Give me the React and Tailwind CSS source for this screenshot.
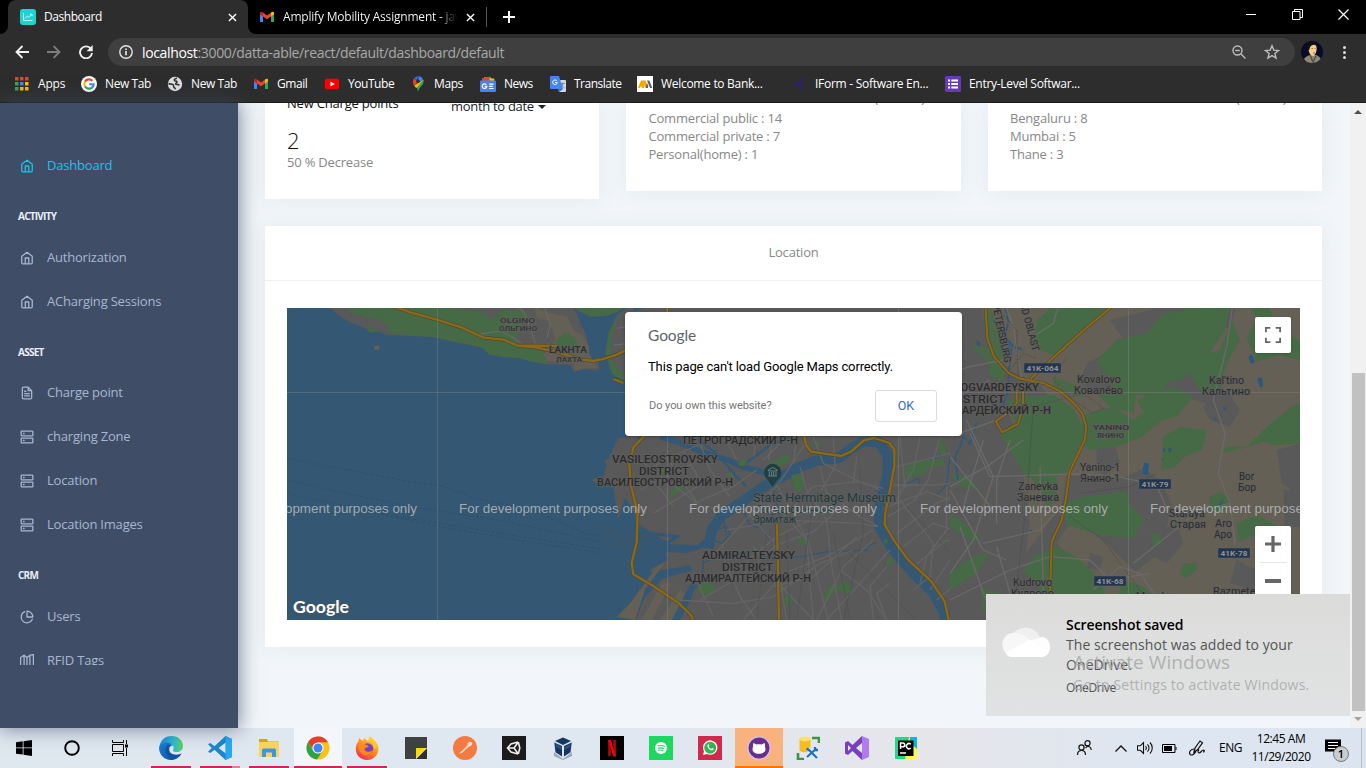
import React from "react";

/* ---------- shared bits ---------- */

const Svg = ({ box = "0 0 24 24", className = "size-4", children, ...rest }) => (
  <svg viewBox={box} className={`shrink-0 ${className}`} fill="none" {...rest}>
    {children}
  </svg>
);

/* ---------- browser icons ---------- */

const Gmail = ({ className = "size-4" }) => (
  <Svg box="0 0 16 16" className={className}>
    <path d="M1 4.2V13h3V6.8z" fill="#4285f4" />
    <path d="M15 4.2V13h-3V6.8z" fill="#34a853" />
    <path d="M4 3.4v4L8 10.3l4-2.9v-4L8 6.4z" fill="#ea4335" />
    <path d="M1 4c0-1.6 1.6-1.7 3-.6v4L1 5.2z" fill="#c5221f" />
    <path d="M15 4c0-1.6-1.6-1.7-3-.6v4l3-2.2z" fill="#fbbc04" />
  </Svg>
);

const AppsGrid = () => (
  <Svg box="0 0 16 16">
    {["#ea4335", "#ea4335", "#ea4335", "#34a853", "#4285f4", "#fbbc04", "#34a853", "#fbbc04", "#fbbc04"].map((c, i) => (
      <rect key={i} x={(i % 3) * 5} y={1 + Math.floor(i / 3) * 5} width="3.500" height="3.500" fill={c} />
    ))}
  </Svg>
);

const GoogleG = () => (
  <Svg box="0 0 16 16">
    <circle cx="8" cy="8" r="8" fill="#fff" />
    <g strokeWidth="2.1">
      <path d="M11.4 4.8A4.7 4.7 0 0 0 4 5.6" stroke="#ea4335" />
      <path d="M4 5.6a4.7 4.7 0 0 0 0 4.8" stroke="#fbbc04" />
      <path d="M4 10.4a4.7 4.7 0 0 0 7 1.2" stroke="#34a853" />
      <path d="M11 11.6a4.7 4.7 0 0 0 1.6-3.4H8.2" stroke="#4285f4" />
    </g>
  </Svg>
);

const GlobeMark = () => (
  <Svg box="0 0 16 16">
    <circle cx="8" cy="8" r="7.2" fill="#dedfe1" />
    <path d="M10 2.200C8 2.500 6.800 3.500 7.500 4.500c.8.800 2.500.4 2.600 1.500 0 1-1.800.8-1.500 1.900.5 1 2.700.2 3.900 1.300M1.500 7.500c1.500.8 3 .3 4.500 1.200 1 .8.300 1.800 1 2.600.7.500 1.400.4 1.200 2" stroke="#2d2d2d" strokeWidth="1.500" />
  </Svg>
);

const YouTube = () => (
  <Svg box="0 0 16 16">
    <rect x=".8" y="2.700" width="14.400" height="10.600" rx="2.500" fill="#f00" />
    <path d="M6.500 5.500v5L10.700 8z" fill="#fff" />
  </Svg>
);

const MapsPin = () => (
  <Svg box="0 0 16 16">
    <path d="M4.200 9.800l9-6.400c.4 2.200 0 3.500-1 5L6.200 12z" fill="#fbbc04" />
    <path d="M7 11.500l6.200-7.800c.6 3-.5 4.800-2 6.500-1.600 2-2.600 3-3.200 5.800-.3-2-.6-3-1-4.500z" fill="#34a853" />
    <path d="M3 5.500C3 8 3.600 9 4.400 10L8 5.700 4 2.600C3.300 3.400 3 4.400 3 5.500z" fill="#ea4335" />
    <path d="M4 2.600A5.200 5.200 0 0 1 9.500.3L6.400 4z" fill="#1a73e8" />
    <path d="M9.500.3a5 5 0 0 1 3.400 3L9.600 7 8 3.500z" fill="#4285f4" />
    <circle cx="8" cy="5.300" r="1.800" fill="#2d2d2d" />
  </Svg>
);

const NewsMark = () => (
  <Svg box="0 0 16 16">
    <path d="M1.500 3l9-2.500.8 3z" fill="#34a853" />
    <path d="M4 1.200l10.500 1.500L14 5H4z" fill="#fbbc04" />
    <path d="M2 2.500l7-1.500 1 4H2z" fill="#ea4335" />
    <rect x="0" y="4.500" width="16" height="11.500" rx="1" fill="#4285f4" />
    <path d="M6.300 8.700A2.300 2.300 0 1 0 6.800 10.400H4.800M9.200 8.200h4.300M9.200 10.400h3.500M9.200 12.500h4.300" stroke="#fff" strokeWidth="1.200" />
  </Svg>
);

const TranslateMark = () => (
  <Svg box="0 0 16 16">
    <path d="M6 4h9a1 1 0 0 1 1 1v10a1 1 0 0 1-1 1H9z" fill="#d5d7da" />
    <path d="M1 0h8l4 13H1a1 1 0 0 1-1-1V1a1 1 0 0 1 1-1z" fill="#4285f4" />
    <path d="M6.800 4.800a2.300 2.300 0 1 0 .5 1.700H5" stroke="#fff" strokeWidth="1" />
    <path d="M10.500 7.500h4.500M12.700 6.500v1c0 2-1 3.500-2 4.300M11 8c.6 1.600 2 3 3.500 3.800" stroke="#607d9b" strokeWidth=".8" />
    <path d="M9 16l4-3H8z" fill="#3367d6" />
  </Svg>
);

const BankMark = () => (
  <Svg box="0 0 16 16">
    <path d="M0 0h16v16H0z" fill="#fff" />
    <path d="M1 12L4 4.500h2.500L8 9l-1 3H5l-1-2-1 2z" fill="#f5a800" />
    <path d="M6 4.500h2.600l2.600 7.500H8.800z" fill="#f5a800" />
    <path d="M10 4.500h2.400L15.300 12H13zM8.500 12L10 7l1.300 3-.5 2z" fill="#5c6168" />
  </Svg>
);

const IFormMark = () => (
  <Svg box="0 0 16 16">
    <path d="M12.500 1c.5 2.500-1 4-3 5l-6 2 6 2c2 1 3.500 2.500 3 5-2-.5-2.500-3.500-5-5L3 8l4.500-2c2.500-1.500 3-4.500 5-5z" fill="#2b2080" />
    <path d="M3 8h8" stroke="#2b2080" strokeWidth="1.500" />
  </Svg>
);

const FormsMark = () => (
  <Svg box="0 0 16 16">
    <rect width="16" height="16" rx="1" fill="#673ab7" />
    <path d="M3 4.500h2M3 8h2M3 11.500h2M6.300 4.500H13M6.300 8H13M6.300 11.500H13" stroke="#fff" strokeWidth="1.900" />
  </Svg>
);

const bookmarks = [
  [AppsGrid, "Apps", "w-[66px] gap-[7px]", "tracking-[-0.2px]"],
  [GoogleG, "New Tab", "w-[86px] gap-[8px]", "tracking-[-0.4px]"],
  [GlobeMark, "New Tab", "w-[86px] gap-[8px]", "tracking-[-0.4px]"],
  [Gmail, "Gmail", "w-[71px] gap-[8px]", "tracking-[-0.45px]"],
  [YouTube, "YouTube", "w-[86px] gap-[8px]", "tracking-[-0.45px]"],
  [MapsPin, "Maps", "w-[70px] gap-[8px]", "tracking-[-0.4px]"],
  [NewsMark, "News", "w-[70px] gap-[8px]", "tracking-[-0.5px]"],
  [TranslateMark, "Translate", "w-[87px] gap-[8px]", "tracking-[-0.5px]"],
  [BankMark, "Welcome to Bank...", "w-[154px] gap-[8px]", "tracking-[-0.3px]"],
  [IFormMark, "IForm - Software En...", "w-[154px] gap-[8px]", "tracking-[-0.27px]"],
  [FormsMark, "Entry-Level Softwar...", "w-[150px] gap-[8px]", "tracking-[-0.3px]"],
];

const Cross = ({ className }) => (
  <Svg box="0 0 10 10" className={className} stroke="#fff" strokeWidth="1.500">
    <path d="M1 1l8 8M9 1L1 9" />
  </Svg>
);

function Browser() {
  return (
    <header className="h-[103px] shrink-0 border-b border-[#1b1b1b] bg-[#2d2d2d] text-white">
      <div className="flex h-[34px] bg-black">
        <div className="flex w-[8px] items-end">
          <Svg box="0 0 8 8" className="size-2"><path d="M8 0v8H0a8 8 0 0 0 8-8z" fill="#2d2d2d" /></Svg>
        </div>
        <div className="flex w-[240px] items-center rounded-t-lg bg-[#2d2d2d] pl-3">
          <Svg box="0 0 16 16">
            <rect width="16" height="16" rx="3" fill="#1dd5d0" />
            <path d="M3.500 4v7.500h9M4.800 9.500l2.500-2.500 1.500 1.400 3-3M10 5.200h2v2" stroke="#fff" strokeWidth="1" opacity=".75" />
          </Svg>
          <span className="ml-2 w-[184px] text-[12px] tracking-[-0.45px]">Dashboard</span>
          <Cross className="size-[9px]" />
        </div>
        <div className="flex w-[8px] items-end">
          <Svg box="0 0 8 8" className="size-2"><path d="M0 0v8h8a8 8 0 0 1-8-8z" fill="#2d2d2d" /></Svg>
        </div>
        <div className="flex w-[230px] items-center pl-[3px]">
          <Gmail className="size-4" />
          <span className="ml-2 w-[177px] overflow-hidden whitespace-nowrap bg-gradient-to-r from-white from-88% to-black to-100% bg-clip-text text-[12px] tracking-[-0.2px] text-transparent">
            Amplify Mobility Assignment - jav
          </span>
          <Cross className="ml-[6px] size-[9px]" />
        </div>
        <div className="mt-[7px] h-5 w-px bg-[#555]" />
        <Svg box="0 0 12 12" className="mt-[11px] ml-[16px] size-3" stroke="#fff" strokeWidth="2"><path d="M6 0v12M0 6h12" /></Svg>
        <div className="ml-auto flex items-start gap-[35px] pt-[9px] pr-[17px]">
          <Svg box="0 0 11 11" className="size-[11px]" stroke="#fff"><path d="M0 5.500h10" /></Svg>
          <Svg box="0 0 11 11" className="size-[11px]" stroke="#fff"><path d="M.5 2.500h7.500v8H.5zM2.500 2.500v-2h8v8H8" /></Svg>
          <Svg box="0 0 11 11" className="size-[11px]" stroke="#fff" strokeWidth="1.200"><path d="M.5.5l10 10M10.500.5l-10 10" /></Svg>
        </div>
      </div>
      <div className="flex h-[36px] items-center">
        <div className="flex w-[108px] items-center gap-[18px] pl-[15px]">
          <Svg box="0 0 14 14" className="size-[14px]" stroke="#f1f1f1" strokeWidth="1.800"><path d="M14 7H1.500M7.500 1L1.500 7l6 6" /></Svg>
          <Svg box="0 0 14 14" className="size-[14px]" stroke="#7d7d7d" strokeWidth="1.800"><path d="M0 7h12.500M6.500 1l6 6-6 6" /></Svg>
          <Svg box="0 0 14 14" className="size-[14px]"><path d="M12 4A6 6 0 1 0 13 8" stroke="#f1f1f1" strokeWidth="1.900" /><path d="M13.700 0v6.200H7.500z" fill="#f1f1f1" /></Svg>
        </div>
        <div className="flex h-7 w-[1187px] items-center rounded-full bg-[#3f3f3f] pl-[11px]">
          <Svg box="0 0 14 14" className="size-[14px]" stroke="#e6e6e6" strokeWidth="1.400"><circle cx="7" cy="7" r="6.200" /><path d="M7 6v4.300M7 3.500v1.500" strokeWidth="1.700" /></Svg>
          <span className="ml-[9px] text-[14px] tracking-[-0.35px] text-[#a9a9a9]"><span className="text-white">localhost</span>:3000/datta-able/react/default/dashboard/default</span>
          <Svg box="0 0 14 14" className="mr-[18px] ml-auto size-[14px]" stroke="#bdbdbd" strokeWidth="1.400"><circle cx="5.500" cy="5.500" r="4.500" /><path d="M9 9l4.500 4.500M3.300 5.500h4.400" /></Svg>
          <Svg box="0 0 16 16" className="mr-[15px] size-4" stroke="#bdbdbd" strokeWidth="1.400"><path d="M8 1.800l1.800 4.300 4.700.4-3.600 3 1.100 4.600-4-2.500-4 2.500 1.100-4.600-3.600-3 4.700-.4z" /></Svg>
        </div>
        <Svg box="0 0 22 22" className="ml-[6px] size-[22px]">
          <clipPath id="avatar"><circle cx="11" cy="11" r="11" /></clipPath>
          <g clipPath="url(#avatar)">
            <path d="M0 0h22v22H0z" fill="#080a2b" />
            <path d="M3 18c1-2 3-3 6-4l6 0c3 1 5 3 5 5v3H6z" fill="#8f8771" />
            <path d="M8 4c3-2 7-1 7.500 2 .5 3-.5 8-3.500 9-2 0-4-3-4.500-6z" fill="#f2cf8b" />
            <path d="M6.500 9C5 4 7 1 11 1c4-.5 5.500 2 5 3.500-3-1.500-6-.5-7 2l-1 3z" fill="#16110e" />
            <path d="M10.500 7.500h1.500M13.500 7.500h1M12 12h2" stroke="#9c7041" />
            <path d="M9 14l3 7 3-6" stroke="#4e5447" strokeWidth="1.500" />
          </g>
        </Svg>
        <div className="ml-[20px] flex flex-col gap-[2px]">
          <i className="size-[3px] rounded-full bg-[#ddd]" /><i className="size-[3px] rounded-full bg-[#ddd]" /><i className="size-[3px] rounded-full bg-[#ddd]" />
        </div>
      </div>
      <nav className="flex h-[28px] items-center pl-[15px]">
        {bookmarks.map(([Icon, name, w, t], i) => (
          <div key={i} className={`flex items-center whitespace-nowrap ${w}`}>
            <Icon />
            <span className={`text-[12px] ${t}`}>{name}</span>
          </div>
        ))}
      </nav>
    </header>
  );
}

/* ---------- sidebar ---------- */

const glyphs = {
  home: <path d="M3 9l9-7 9 7v11a2 2 0 0 1-2 2H5a2 2 0 0 1-2-2zM9 22V12h6v10" />,
  file: <path d="M14 2H6a2 2 0 0 0-2 2v16a2 2 0 0 0 2 2h12a2 2 0 0 0 2-2V8zM14 2v6h6M16 13H8M16 17H8M10 9H8" />,
  server: <path d="M3 2h18a1 1 0 0 1 1 1v6a1 1 0 0 1-1 1H3a1 1 0 0 1-1-1V3a1 1 0 0 1 1-1zM3 14h18a1 1 0 0 1 1 1v6a1 1 0 0 1-1 1H3a1 1 0 0 1-1-1v-6a1 1 0 0 1 1-1zM6 6h1M6 18h1" />,
  pie: <path d="M21.200 15.900A10 10 0 1 1 8 2.800M22 12A10 10 0 0 0 12 2v10z" />,
  map: <path d="M1 22V6l6-4 5 4 5-4 6-1v21M7 2v20M12 6v16M17 3v19" />,
};

const Caption = ({ children, className = "h-12 pt-[20px]" }) => (
  <div className={`shrink-0 pl-[18px] text-[10px] leading-[18px] font-bold tracking-[-0.75px] text-[#e8edf7] ${className}`}>{children}</div>
);

const Item = ({ icon, children, className = "text-[#a9b7d0]" }) => (
  <div className={`flex h-11 shrink-0 items-center pl-5 ${className}`}>
    <Svg className="mt-[2px] size-[14px]" stroke="currentColor" strokeWidth="2.200" strokeLinejoin="round" strokeLinecap="round">{glyphs[icon]}</Svg>
    <span className="ml-[13px] text-[13px] leading-5 tracking-[-0.200px]">{children}</span>
  </div>
);

function Sidebar() {
  return (
    <aside className="relative z-10 w-[238px] shrink-0 bg-[#3f4d67] pt-10 shadow-[1px_0_18px_1px_#3f4d67a0]">
      <div className="flex h-[522px] flex-col overflow-hidden">
        <Item icon="home" className="text-[#1dc4e9]">Dashboard</Item>
        <Caption>ACTIVITY</Caption>
        <Item icon="home">Authorization</Item>
        <Item icon="home">ACharging Sessions</Item>
        <Caption className="h-[47px] pt-[20px]">ASSET</Caption>
        <Item icon="file">Charge point</Item>
        <Item icon="server">charging Zone</Item>
        <Item icon="server">Location</Item>
        <Item icon="server">Location Images</Item>
        <Caption>CRM</Caption>
        <Item icon="pie">Users</Item>
        <Item icon="map">RFID Tags</Item>
      </div>
    </aside>
  );
}

/* ---------- map drawing ---------- */

const WATER = "#345874";
const GREEN = "#466a45";
const TAN = "#656055";

/* x is the left edge, y the baseline and w the drawn width of a label */
const Label = ({ x, y, w, s = 11, c = "#2b2b2b", weight = 500, children, ...rest }) => (
  <text x={x} y={y} fontSize={s} textLength={w} lengthAdjust="spacingAndGlyphs" fontWeight={weight} fill={c} stroke="#5f5f5f" strokeWidth="1.500" paintOrder="stroke" {...rest}>
    {children}
  </text>
);

const Shield = ({ x, y, w = 32, children }) => (
  <g>
    <rect x={x} y={y} width={w} height="10" fill="#25354b" stroke="#5c6370" strokeWidth=".5" />
    <text x={x + 2.500} y={y + 8.100} fontSize="8" fontWeight="700" fill="#8e939c" textLength={w - 5} lengthAdjust="spacingAndGlyphs">{children}</text>
  </g>
);

const Highway = ({ d, w = 7 }) => (
  <g strokeLinejoin="round">
    <path d={d} stroke="#564a26" strokeWidth={w + 4} />
    <path d={d} stroke="#87691f" strokeWidth={w} />
  </g>
);

function WestShore() {
  return (
    <g transform="translate(287 305) scale(.33333)">
      <path d="M0 0h1020v960H0z" fill={WATER} />
      <path d="M120 0l40 35 30 17 50 20 10 10 25-2 25 10 70 2 70 4 60 14 60 12 30 8 15 18 35 7 60 5 35 10 45 8 70 2 12 20 28-8 45 5V165l-15 5-14-20-8-60-18-35L860 0z" fill="#595959" />
      <path d="M165 0l25 20 35 10 28 15-13 30 10 8 30-5 90 14 70 4 60 14 60 12 30 8 15 18 35 7 60 5 35 10 45 8-5-30-18-20-45-10-30-15 12-25 32-48-20-12-60-4-32 28-20-18L430 0z" fill={GREEN} />
      <path d="M235 45l35-5 38 25-5 18-45-12z" fill="#595959" />
      <path d="M740 0l30 20 70 15 20 40 30 20 28 50-5 18 22 25-45 2-28 8-2-24-80-6-10-20 35-45-20-55-35-10z" fill={TAN} />
      <path d="M805 110l30-30 28 20 15 35-20 5-20-20-25 15zM860 0h155l-40 38-90 4z" fill={GREEN} />
      <path d="M860 10l50 25 50-3 60-22-45 65-15 65-20 5-4 25-11-30-8 22-10-15-5-65z" fill={WATER} />
      <path d="M1020 10l-30 20-20 45-5 40 5 70 20 28 30 17z" fill="#595959" />
      <path d="M1000 20l-25 65-4 70 6 20 43 40v17l-45-25-20-62 10-65z" fill={GREEN} />
      <path d="M262 122h15v12h-15z" fill={TAN} />
      <g stroke="#6b6b6b" strokeWidth="3">
        <path d="M680 0l30 20 20 50 15 45M560 90l80-12 40 20 40 30M770 0l20 60-10 40M980 120l40-4M990 70l30-5" />
      </g>
      <Highway d="M310 0l60 22 80 22 75 24 65 30 60 6 40 17 120 2M690 122l60 6 55 12 80 24 35 4 50-12 50-18M980 222l40 17" />
      <g stroke="#2f4b68" strokeWidth="2.200" strokeDasharray="10 6">
        <path d="M0 460l180 35 190 35 90 12 110 40 160 30 170 76 120 5M0 525l200 45 190 38 260 40 370 80M0 565l280 60 180 30 240 40 320 48M200 610l260 55 260 45 220 33 80-2" />
      </g>
      <path d="M945 445l15-4 8 14 52 25v10l-28-8-12 65-60-15-6-10 60-10-25-55zM985 545l28-15v100h-15zM1020 890l-20 10-12 60h32z" fill="#595959" />
    </g>
  );
}

function City() {
  return (
    <g transform="translate(600 300) scale(.33333)">
      {/* islands, gulf and the Neva with its arms */}
      <path d="M76 0H1120v980H76z" fill="#595959" />
      <path d="M60 240h20v170h45l-30 35-15 28-20-3-15 12-45-8v66l30 10-8 30 20 55 18 8 5-50 18-12 22 15-8 30 18 45 60 40 45 25-25 30-38 10-5 40 120-20 5 15-90 25-55 60-35 90H0V240z" fill={WATER} />
      <path d="M55 415l60-10-20 70-10 80-35 10-45-20 25-80zM40 560l50-10 20 60-10 18-25-35-20 65z" fill="#595959" />
      <path d="M150 710h25l28 18-30 22-50-5zM205 735l25-2 60 3 40-30 8 28-75 25-58-3zM115 780l85-15 5 15-60 30z" fill={WATER} />
      <path d="M50 950l40-40 80-110 25-12-60 80-30 92zM125 960l60-110 30 0-60 110zM180 960l60-90 15 10-30 80z" fill={TAN} />
      <path d="M215 960l60-115 20-20-25 80-30 55z" fill={WATER} />
      <g stroke={WATER} strokeLinejoin="round">
        <path d="M325 745l12-60 30-40 65-43 54-40 40-20 60-35 60-25 70-8 40-30 35-20 45 2 28 40-2 60-22 80-4 70 40 70 65 75 58 55 35 65v50" strokeWidth="31" />
        <path d="M180 410l60 18 60 26 90 28 40 20 60 15 55 8" strokeWidth="17" />
        <path d="M270 400l80 60 60 70 30 30M430 495l80-60 60-25" strokeWidth="7" />
        <path d="M345 690l35-10 10 25-25 25-35-15M310 780l-5 60-50 60-15 50M305 790l60-25 90-10 60 20 90-5 80-15 120-5M370 650l10 60M420 615l30 60 35 10 40 50M520 570l15 60-40 40M800 740l28-12M905 560l50-25 5 20M1005 590l35-35 10-85 20-35 0-25M1000 480l40-30" strokeWidth="4" />
      </g>
      <path d="M150 700l80 10-60 40-25-15M100 30l30-10" stroke={WATER} strokeWidth="10" />
      {/* parks */}
      <path d="M415 490l15-12 10 8-5 12h-20zM500 490l30-10 20-15 25 8-20 20-40 12zM575 525l30-5 10 30-15 28-20-15zM640 430l20-5 4 12-18 8zM915 500l35-18 80-5 5 18-40 8-25 20-50 14zM1010 435l10-25 20 45-12 15zM380 525l15-8 5 8-15 8zM175 510l18-6 5 15-15 5zM200 600l20-35 40-10 20-15-5 15-45 25-30 25zM290 865l25-20 35 15-15 25-45-5zM665 895l30-45 20 10 15-20 25 18v20l-25 3-20-15-25 35zM553 890l15-5 10 20-20 20zM590 720l18-10 15 10-15 20zM860 780l15-10 5 20-20 10zM1035 720l30 18 8 25zM1065 830l50-25v25zM850 720l10-4 4 10-8 5z" fill={GREEN} />
      {/* street grid */}
      <g stroke="#646465" strokeWidth="4">
        <path d="M125 520l80-45 90-40M120 570l180-90M160 640l140-85 60-25M200 470l40 65 50 70M250 450l60 110M300 430l30 80 60 80M160 540l60 80M120 480l180 135M280 610l120-50 70-50" />
        <path d="M350 755l100-110 90-100 80-120M380 690l170-30 230 10 50 10M430 625l90 100 40 235M480 600l60 30 80 90 20 240M530 555l45 80 50 90 60 235M600 500l20 70 60 90 15 140 30 160M660 500l20 80 100 70 55 30M560 640l80-80 130-15 80 20M420 800l110-90 100-50M300 900l120-70 110-95 110-40 100-90M230 900l170 10 120-20 140-100 100-40M520 860l120-30 130-120M430 960l120-140 130-50 140-80M650 960l80-160 90-80M280 820l60 130M370 770l50 120 50 70M460 740l75 110 105 110M720 810l80 60 60 90M820 960l-10-100 50-60M870 750l-90 100-100 110" />
        <path d="M640 410l30 80 100 50 70 30M700 410l5 90-40 70M770 470l-10 80M900 410l15 150-30 50M960 410l-20 100-45 70M1020 410l-35 130-40 60-80 50M890 500l120-30 110-30M870 555l130 0 120-10M850 625l130-50 140 50M890 700l120-90 110-50M910 740l90-70 120 40M900 600l100 130-10 100-50 40M940 800l100-80 80 30M1040 560l0 130-60 80-20 80M990 870l60-90 70 30M1010 900l110-90M1040 960l80-80M870 850l-40 30 30 80" />
        <path d="M380 420l30 60M470 410l-10 60M520 410l-15 70M590 410l-10 80M550 420l-60 60" />
      </g>
      <g stroke="#4d5055" strokeWidth="2">
        <path d="M500 700l-30 260M560 700l10 260M640 600l-50 360M700 700l50 260M780 500l10 200-60 260M750 760l200 200M920 620l200 210M1060 500l-10 460M0 680l100 30 80 0M0 700l80 30 90-5M0 720l70 25 70-5" />
      </g>
      <Highway d="M0 180l45-14 30-14M40 237l30 12M201 0v35M135 405l-35 38-12 50 5 65 20 80-3 90-15 60 5 35 60 35 75 50 40 40 8 30" />
      <Highway d="M531 670l6 290M612 405l6 30 15 20 90 13 30-13 40-35 30-6 45 15 15 20v50l-15 80-12 60-2 35 30 50 40 55 70 65 40 60 13 60" />
      {/* museum pin */}
      <path d="M517 560l-15-22a26 26 0 1 1 32 0z" fill="#203f42" />
      <path d="M505 510l13-8 13 8v3h-26zM508 527v-11M515 527v-11M521 527v-11M528 527v-11M505 528h26" stroke="#80908f" strokeWidth="2.500" />
    </g>
  );
}

function EastSuburbs() {
  return (
    <g transform="translate(950 300) scale(.33333)">
      <path d="M68 0H1060v980H68z" fill="#595959" />
      <path d="M90 0H1060v980H330l-20-50-120-20 20-300 20-140-80-190-100-100-40-180z" fill={TAN} />
      <path d="M0 410l150-20 60 100 30 180-30 220-110 80H0z" fill="#595959" />
      <path d="M0 0h95l15 130 70 80 90 45 60 80 80 60-20 40-80-60-120-50-150 50L0 380z" fill="#595959" />
      {/* fields and built-up patches */}
      <path d="M480 60l120-30 80-40h190l-30 90-60 20-20 80 60 60-20 80-100-30-80 20-80-60-90 40-60-40 20-60 120-60zM350 525l170 10 60-30 55 40 30 70-30 140-80 60-90-90-130-100zM330 620l30 50-40 60 40 50-60 40-30 200h-80l30-250zM440 440l50-20 20 70-50 40-20-30zM980 450l75-20v160l-60-40zM790 290l40-20 40 60-30 50-60-20-20-40zM640 690l40-20 20 60-50 60-40-20zM420 760l40 10-10 40-40-5zM860 780l60 30-10 60-70-20zM1000 570h55v110h-50z" fill="#595959" />
      <path d="M330 0l180 0-130 100-60 70-70-30 10-80zM440 180l60-60 90-20 50-60 80-10 10 50 20 90 60-20 35-90 25 60-40 70-20 90-50 10-40-70-60 20-40 60-60-20-10 60-70-20-50-50 60-10zM120 190l50 25-15 30-40-20zM230 290l80-5 60 40 35 70-25 60-35 70-80-6-20-5-5-80-50-80-20-50zM410 340l80-20 60 40 40-30 40 35-60 50-70 25-80 10-40-30zM640 410l50-30 80 10-15 60-50 20-30 30-40 10zM830 440l60 0 60-60 90-70h20v120l-90 5-30-10-60 20-70 15zM340 610l60-20 130-15 10 40 40 40-30 60-100-10-100-30zM240 525l80 2 0 80-30 10zM250 770l70-30 60 30 80 80 20 110H310l-20-60-70-90zM0 640l60 45 30 30-20 10L0 680zM780 590l30-15 30 25-10 30-50 5zM860 670l60-25 60 30-45 20-70 30zM700 790l40 0 0 20-30 25-20-10zM520 840l60 20 80 70v40H560l-70-50zM900 20l50-5 20 30-30 30 40 50 30-30 40 30v55l-60-15-70 20-30-70 30-60zM0 820l60-45 60-20-40 65-80 50z" fill={GREEN} />
      <path d="M640 60l120-60 80 20-15 70-60 90-70 60-70 10 30-90zM560 300l110-40 60 30-50 60-80 20zM150 400l70-50 40 60 10 115-40 10z" fill={GREEN} />
      <path d="M310 230l90 35 0 25-90-20zM60 130l80 20 30 60-50-10zM120 20l30 80 20 90-40-20-30-110zM600 700l30 0 10 30-30 10zM90 860l60 20-50 60zM0 520l60 10 30 40-60-10z" fill={GREEN} opacity=".8" />
      {/* ponds and creeks */}
      <path d="M895 170l10-8 10 25-12 5zM922 233l14 0 4 25-10 5zM582 488l16 2-5 36-16-5zM640 445l6 0-2 12-6-1zM655 445l10 0-2 12-8-1zM805 615l15-18-8 25zM80 122l12 8-2 10-10-8zM820 322l8 0 2 8-8 0zM792 350l10 10-5 3zM635 475l5 0-2 8z" fill="#2d577c" />
      <path d="M165 20l10 45-10 45 20 40-8 60-5 70-15 40M130 60l60 80 30 10M80 370l-20 60-20-20-10 30-15 30 10 80M240 690l8 8" stroke="#2d577c" strokeWidth="5" strokeDasharray="22 4" />
      {/* streets */}
      <g stroke="#6a6a69" strokeWidth="4">
        <path d="M0 410l140-50M0 560l110-60 110-80M60 400l60 130 250-8 120 5 100 22M50 360l80 170-60 190-70 100M100 730l170-40 60-65M0 900l180-90 120-40 120 10 60 60 120-20M160 0l30 80 25 160M0 220l60-20 100-20M0 300l120-60M850 0l-20 140-40 160 35 100-20 120 35 90 15 120M620 555l30 70M550 790l200-160 90-20M430 870l80-70 60 20 90 130M330 0l-20 70-60 40M270 500l10 380M140 740l60 210" />
        <path d="M0 470l130 160M0 570l100 180 70 30M30 680l70 200 40 90M100 420l-60 200M180 420l-40 120 0 130" />
      </g>
      <g stroke="#474a4a" strokeWidth="2" strokeDasharray="9 3">
        <path d="M120 0l80 90 5 150M250 320l-20 280-40 350M250 320l150-40 60 45-30 15-60-40-60-60 40-70M180 210l40-50 40 15M390 580l150-20 80-40M360 650l100 70 160 220" />
      </g>
      <Highway d="M94 0l13 25 5 90 20 55 45 50 30 15 75 15 50 25 40 35 25 30 12 40-5 40-45 95-12 85-12 60-30 65-5 155M242 236l80-75 90-80L510 0M200 270v40l-30 30-33 24 20 33 47-25 15-50v-50" w={6} />
    </g>
  );
}

function CityMap() {
  return (
    <svg viewBox="287 308 1013 312" className="h-[312px] w-[1013px] font-[Roboto,sans-serif]" fill="none">
      <WestShore />
      <City />
      <EastSuburbs />
      <g stroke="#8d8d8d" strokeWidth="1" opacity=".35">
        <path d="M437.500 308v312M667.500 308v312M898.500 308v312M1128.500 308v312M287 392.500h1013" />
      </g>

      <Label x={500} y={323} w={35} s={7.500} c="#333">OLGINO</Label>
      <Label x={499} y={331} w={38} s={7.500} c="#333">ОЛЬГИНО</Label>
      <Label x={549} y={353} w={38} s={8.500} c="#2d2d2d">LAKHTA</Label>
      <Label x={556} y={362} w={26} s={8} c="#333">ЛАХТА</Label>
      <Label x={683} y={444} w={115}>ПЕТРОГРАДСКИЙ Р-Н</Label>
      <Label x={612} y={462.500} w={106}>VASILEOSTROVSKY</Label>
      <Label x={639} y={474.500} w={50}>DISTRICT</Label>
      <Label x={597} y={485.500} w={136}>ВАСИЛЕОСТРОВСКИЙ Р-Н</Label>
      <Label x={702} y={559} w={93}>ADMIRALTEYSKY</Label>
      <Label x={722} y={571} w={51}>DISTRICT</Label>
      <Label x={685} y={582} w={126}>АДМИРАЛТЕЙСКИЙ Р-Н</Label>
      <Label x={753} y={502} w={143} s={12} c="#1e3a3c" weight={400}>State Hermitage Museum</Label>
      <Label x={757} y={513} w={75} s={10} c="#1e3a3c" weight={400}>Государственный</Label>
      <Label x={753} y={523} w={43} s={10} c="#1e3a3c" weight={400}>Эрмитаж</Label>
      <Label x={924} y={391} w={115}>KRASNOGVARDEYSKY</Label>
      <Label x={951} y={403} w={54}>DISTRICT</Label>
      <Label x={904} y={414} w={147}>КРАСНОГВАРДЕЙСКИЙ Р-Н</Label>
      <g transform="rotate(78 995 308)"><Label x={991} y={310} w={60} s={10} weight={400}>PETERSBURG</Label></g>
      <g transform="rotate(75 1021 300)"><Label x={1012} y={302} w={62} s={10} weight={400}>GRAD OBLAST</Label></g>
      <Label x={1077} y={382.500} w={44} s={10.500} weight={400}>Kovalovo</Label>
      <Label x={1074} y={393.500} w={49} s={10.500} weight={400}>Ковалёво</Label>
      <Label x={1209} y={383.500} w={35} s={10.500} weight={400}>Kal'tino</Label>
      <Label x={1202} y={394.500} w={48} s={10.500} weight={400}>Кальтино</Label>
      <Label x={1093} y={429.500} w={36} s={8} c="#343434">YANINO</Label>
      <Label x={1097} y={437.500} w={27} s={7.500} c="#343434">ЯНИНО</Label>
      <Label x={1080} y={471} w={40} s={10.500} weight={400}>Yanino-1</Label>
      <Label x={1080} y={481.500} w={40} s={10.500} weight={400}>Янино-1</Label>
      <Label x={1018} y={490} w={40} s={10.500} weight={400}>Zanevka</Label>
      <Label x={1017} y={500.500} w={42} s={10.500} weight={400}>Заневка</Label>
      <Label x={1239} y={480} w={15} s={10.500} weight={400}>Bor</Label>
      <Label x={1238} y={490.500} w={18} s={10.500} weight={400}>Бор</Label>
      <Label x={1169} y={517} w={36} s={10.500} weight={400}>Staraya</Label>
      <Label x={1170} y={527.500} w={36} s={10.500} weight={400}>Старая</Label>
      <Label x={1215} y={527} w={17} s={10.500} weight={400}>Aro</Label>
      <Label x={1214} y={537.500} w={18} s={10.500} weight={400}>Аро</Label>
      <Label x={1013} y={586} w={39} s={10.500} weight={400}>Kudrovo</Label>
      <Label x={1011} y={597} w={43} s={10.500} weight={400}>Кудрово</Label>
      <Label x={1136} y={600} w={45} s={10.500} weight={400}>Myaglovo</Label>
      <Label x={1213} y={595} w={62} s={10.500} weight={400}>Razmetelevo</Label>
      <Shield x={1024} y={363} w={37}>41K-064</Shield>
      <Shield x={1139} y={479}>41K-79</Shield>
      <Shield x={1218} y={548}>41K-78</Shield>
      <Shield x={1094} y={576}>41K-68</Shield>

      <g fill="#b9bcbe" fillOpacity=".85" className="font-['Liberation_Sans',sans-serif]" fontSize="13.500">
        {[229, 459, 689, 920, 1150].map((x) => (
          <text key={x} x={x} y="513" textLength="188" lengthAdjust="spacingAndGlyphs">For development purposes only</text>
        ))}
      </g>
      <text x="293" y="613" fontSize="17" fontWeight="700" fill="#fff" stroke="#555" strokeWidth="1" paintOrder="stroke" textLength="56" lengthAdjust="spacingAndGlyphs" className="font-[Lato,sans-serif]">Google</text>
    </svg>
  );
}

function ErrorDialog() {
  return (
    <div className="absolute top-[4px] left-[338px] flex h-[124px] w-[337px] flex-col rounded-[4px] bg-white pr-[25px] pl-[23px] pt-[13px] font-[Roboto,sans-serif] shadow-[0_1px_3px_rgba(0,0,0,.3)]">
      <span className="font-[Lato,sans-serif] text-[15.500px] leading-5 tracking-[-0.100px] text-[#616469]">Google</span>
      <span className="mt-[12px] text-[13px] leading-5 tracking-[-0.140px] whitespace-nowrap text-black">This page can't load Google Maps correctly.</span>
      <div className="mt-[13px] flex items-center justify-between pl-px">
        <span className="text-[11px] tracking-[-0.050px] text-[#757575]">Do you own this website?</span>
        <span className="flex h-[32px] w-[62px] items-center justify-center rounded-[3px] border border-[#dadce0] text-[12.500px] text-[#3367d6]">OK</span>
      </div>
    </div>
  );
}

/* ---------- page ---------- */

const card = "bg-white shadow-[0_1px_20px_0_rgba(69,90,100,.08)]";

function Page() {
  return (
    <main className="flex-1 overflow-hidden bg-[#f2f6fa] pl-[27px] text-[13px] leading-[18px] tracking-[-0.200px] text-[#888]">
      <div className="flex items-start gap-[27px]">
        <section className={`h-[96px] w-[334px] px-[22px] ${card}`}>
          <div className="flex text-[#212529]">
            <div className="-mt-[9px] w-[164px] text-[#111]">New Charge points</div>
            <div className="-mt-[6px] flex items-center gap-1 tracking-[-0.300px]">month to date
              <svg viewBox="0 0 8 4" className="mt-px h-1 w-2"><path d="M0 0h8L4 4z" fill="#212529" /></svg>
            </div>
          </div>
          <div className="mt-[10px] text-[22px] leading-[30px] font-light text-[#111]">2</div>
          <div className="-mt-[2px]">50 % Decrease</div>
        </section>
        <section className={`h-[88px] w-[335px] px-[22.500px] ${card}`}>
          <div className="-mt-[14px] h-[20px] text-right"><span className="mr-[14px] tracking-[-0.600px]">(location)</span></div>
          <div>Commercial public : 14</div>
          <div>Commercial private : 7</div>
          <div>Personal(home) : 1</div>
        </section>
        <section className={`h-[88px] w-[334px] px-[22px] ${card}`}>
          <div className="-mt-[14px] h-[20px] text-right"><span className="mr-[14px] tracking-[-0.600px]">(location)</span></div>
          <div>Bengaluru : 8</div>
          <div>Mumbai : 5</div>
          <div>Thane : 3</div>
        </section>
      </div>
      <section className={`mt-[27px] h-[421px] w-[1057px] ${card}`}>
        <div className="flex h-[55px] items-center justify-center border-b border-[#f0f0f0] pb-[2px]">Location</div>
        <div className="relative mx-[22px] mt-[27px] h-[312px] tracking-normal">
          <CityMap />
          <ErrorDialog />
          <div className="absolute top-[9px] left-[968px] flex size-9 items-center justify-center rounded-[2px] bg-white shadow">
            <Svg box="0 0 18 18" className="size-[16px]" stroke="#666" strokeWidth="2"><path d="M1 6V1h5M12 1h5v5M17 12v5h-5M6 17H1v-5" /></Svg>
          </div>
          <div className="absolute top-[218px] left-[968px] flex h-[73px] w-9 flex-col items-center rounded-[2px] bg-white shadow">
            <div className="flex h-[37px] w-[27px] items-center justify-center border-b border-[#e6e6e6]">
              <Svg box="0 0 16 16" className="size-4" stroke="#666" strokeWidth="3.200"><path d="M8 0v16M0 8h16" /></Svg>
            </div>
            <div className="mt-[16px] h-[4px] w-4 bg-[#666]" />
          </div>
        </div>
      </section>
    </main>
  );
}

function Scrollbar() {
  return (
    <div className="flex w-4 shrink-0 flex-col items-center bg-[#f1f1f1]">
      <svg viewBox="0 0 8 4" className="mt-[7px] h-1 w-2"><path d="M0 4h8L4 0z" fill="#505050" /></svg>
      <div className="mt-[259px] h-[338px] w-[13px] bg-[#c1c1c1]" />
      <svg viewBox="0 0 8 4" className="mt-[6px] h-1 w-2"><path d="M0 0h8L4 4z" fill="#a3a3a3" /></svg>
    </div>
  );
}

function Toast() {
  return (
    <div className="absolute top-[594px] left-[986px] z-20 flex h-[122px] w-[364px] bg-gradient-to-b from-[#dbdcda] to-[#e1e2e3] text-[14px] leading-5">
      <Svg box="0 0 48 32" className="mt-[32px] ml-[16px] h-8 w-12">
        <path d="M10 9a16 16 0 0 1 28 2L18 22z" fill="#efefef" />
        <path d="M10 7c7-1 15 4 18 7L3 26C-3 18 2 8 10 7z" fill="#f7f7f7" />
        <path d="M27 15l12-4c7 0 9 6 9 10 0 4-2 8-6 9z" fill="#fdfdfd" />
        <path d="M3 26l24-12 20 11c-1 4-4 6-8 6H10c-3 0-6-2-7-5z" fill="#fff" />
      </Svg>
      <div className="mt-[21px] ml-[16px] flex w-[240px] flex-col whitespace-nowrap">
        <span className="font-semibold tracking-[-0.060px] text-black">Screenshot saved</span>
        <span className="tracking-[0.080px] text-[#545556]">The screenshot was added to your</span>
        <span className="tracking-[0.080px] text-[#545556]">OneDrive.</span>
        <span className="mt-[3px] text-[12px] tracking-[-0.350px] text-[#4f5051]">OneDrive</span>
      </div>
      <div className="absolute top-[55px] left-[87px] flex flex-col whitespace-nowrap text-[#a6a7a8]/85">
        <span className="text-[19px] leading-[26px] tracking-[0.080px]">Activate Windows</span>
        <span className="text-[14px] leading-[19px] tracking-[0.200px]">Go to Settings to activate Windows.</span>
      </div>
    </div>
  );
}

/* ---------- taskbar ---------- */

const Start = () => <Svg box="0 0 16 16"><path d="M0 2.200L6.700 1.300V7.500H0zM7.500 1.200L16 0v7.500H7.500zM0 8.300h6.700v6.300L0 13.700zM7.500 8.300H16V16l-8.500-1.300z" fill="#000" /></Svg>;
const Cortana = () => <Svg box="0 0 16 16"><circle cx="8" cy="8" r="6.800" stroke="#000" strokeWidth="1.900" /></Svg>;
const TaskView = () => <Svg box="0 0 16 16" stroke="#000"><path d="M.5 0v2.500h11V0M.5 16v-2.500h11V16M.5 4.500h11v7H.5zM14.500 0v4M14.500 8v8" /><path d="M13 4.500h3v3h-3z" fill="#000" stroke="none" /></Svg>;

const Edge = () => (
  <Svg className="size-6">
    <defs>
      <linearGradient id="edgeTop"><stop offset=".2" stopColor="#2196dc" /><stop offset=".7" stopColor="#35c1c6" /><stop offset="1" stopColor="#65d43f" /></linearGradient>
      <linearGradient id="edgeLow" y2="1"><stop stopColor="#1683d8" /><stop offset="1" stopColor="#0c4a98" /></linearGradient>
    </defs>
    <path d="M.5 10C2 3 7 0 12.500 0 20 0 24 5 24 10c0 4-3 6-6.500 6-3 0-4.500-1-3-3 1-3-1.500-5-5-5C5 8 2 10 .5 14z" fill="url(#edgeTop)" />
    <path d="M.2 11.500C1 7 6 5.500 10 7c3 1.200 4.500 3 4 5-4-1-5.500 5 .5 6.500 3 .8 5.500.5 8-1-2 4-6 6.500-10.500 6.500C5 24-.5 18 .2 11.500z" fill="url(#edgeLow)" />
    <path d="M9.500 8.200c-5 3-4 11 3 14 3 1 7-1 10-4.800-2.500 1.600-5 1.800-8 1-5-1.500-5-5.500-2.500-7.400z" fill="#11539f" />
    <path d="M14 12c.4-.8 0-1.700-.8-2.400-2 .2-3.300 1.900-3 4 .5 2.500 2.300 4.400 5.300 5-2.500-2-2.500-5-1.500-6.600z" fill="#dfe7f0" />
  </Svg>
);
const Code = () => (
  <Svg className="size-6">
    <path d="M17.500 0L24 3v18l-6.500 3L6.500 13.800 2.300 17 0 15.800 3.800 12 0 8.200 2.300 7l4.200 3.200zM17.800 6.500L10.500 12l7.300 5.500z" fill="#1787cf" fillRule="evenodd" />
    <path d="M17.500 0L24 3v18l-6.500 3z" fill="#2aa8f2" />
  </Svg>
);
const Folder = () => (
  <Svg className="size-6">
    <path d="M2 3h8l1 2.500h11V10H2z" fill="#e0a100" /><path d="M2 6h20v15H2z" fill="#fbd25e" />
    <path d="M5 21v-7a1.500 1.500 0 0 1 1.500-1.500h11A1.500 1.500 0 0 1 19 14v7h-4v-4.500H9V21z" fill="#3c97dc" />
  </Svg>
);
const Chrome = () => (
  <Svg className="size-6">
    <circle cx="12" cy="12" r="11.500" fill="#fbc116" />
    <path d="M2 6.300A11.500 11.500 0 0 1 22 6.200H12L8 15z" fill="#df4033" />
    <path d="M2 6.300A11.500 11.500 0 0 0 11 23.500L16.500 15 7 14.500z" fill="#2ba24c" />
    <circle cx="12" cy="12" r="5.600" fill="#fff" /><circle cx="12" cy="12" r="4.500" fill="#4285f4" />
  </Svg>
);
const Firefox = () => (
  <Svg className="size-6">
    <defs><linearGradient id="fox" x1=".8" x2=".2" y2="1"><stop stopColor="#ffe53a" /><stop offset=".5" stopColor="#ff8a1c" /><stop offset="1" stopColor="#f0255f" /></linearGradient></defs>
    <path d="M15 0c2 2 3 3.500 4.500 4.500C22 7 23.500 9 23.500 13c0 6-5 11-11.500 11S.5 19 .8 12.500C1 9 2 7 3.500 5.200L4 2l4 3 1-3 4 3z" fill="url(#fox)" />
    <circle cx="12.500" cy="13" r="5.800" fill="#7640c8" />
    <path d="M4 8c3-1 5 0 8 1l2 2c-2 .5-3.500.2-4.500 2 0 3 5 4 8.500 1-1 5-8 7-12 3-2-2-3-6-2-9z" fill="#ff8a1c" />
    <path d="M13 6c4-1 6 3 6 7l3-2-3-7-4-3z" fill="#ffcb2a" />
  </Svg>
);
const Sticky = () => (
  <Svg className="size-6"><path d="M1 1h22v22H1z" fill="#3f4040" /><path d="M12 12h11L12 23z" fill="#fcd900" /><path d="M23 12v11H12z" fill="#2f3030" /><path d="M12 22l10-10h1L12 23z" fill="#fff0a0" /></Svg>
);
const Postman = () => (
  <Svg className="size-6"><circle cx="12" cy="12" r="12" fill="#f37b42" /><path d="M6 18l2-2.500 8-8 1.500 1.500-8 7.500zM14 8.500c1-3 4-3.500 5-2s-1 4-3 4z" fill="#fde4d6" /><path d="M8 15.500l8-8" stroke="#f37b42" strokeWidth=".7" /></Svg>
);
const Unity = () => (
  <Svg className="size-6"><path d="M0 0h24v24H0z" fill="#1c1c1c" /><path d="M16 6l-7 2-3.500 4L9 16l7 2M16.300 6l1.500 6-1.500 6M6 12h6l4-5.500M12 12l4 5.500" stroke="#eee" strokeWidth="1.600" /></Svg>
);
const VBox = () => (
  <Svg className="size-6">
    <path d="M3 16l9 7 9-7v4l-9 4-9-4z" fill="#9aa6b8" />
    <path d="M12 1l9.500 4L20 17l-8 5-8-5L2.500 5z" fill="#dce3ea" />
    <path d="M12 1.500L20 5l-8 4-8-4zM3.300 6.500L11 10v10.500l-6.500-4.300zM20.700 6.500L13 10v10.500l6.500-4.300z" fill="#163660" />
    <path d="M4.500 8l6.500 3v3L5 11zM19.500 8L13 11v3l6-3z" fill="#295486" />
  </Svg>
);
const Netflix = () => (
  <Svg className="size-6"><path d="M0 0h24v24H0z" fill="#000" /><path d="M8.200 4h2.600v16l-2.600.4zM13.300 4h2.600v16.400l-2.600-.4z" fill="#b20710" /><path d="M8.200 4h2.600l5.100 16.400-2.700-.4z" fill="#e50914" /></Svg>
);
const Spotify = () => (
  <Svg className="size-6"><path d="M0 0h24v24H0z" fill="#1ed760" /><circle cx="12" cy="12" r="6" fill="#fff" /><path d="M8.500 10c3-.8 5.500-.4 7.500.6M8.800 12.200c2.500-.7 4.500-.4 6.300.6M9 14.200c2-.5 3.700-.3 5.200.5" stroke="#1ed760" strokeWidth="1.100" /></Svg>
);
const WhatsApp = () => (
  <Svg className="size-6"><path d="M0 0h24v24H0z" fill="#cf2a4c" /><path d="M5 19l1-3.800A7.200 7.200 0 1 1 9 18z" fill="#fff" /><circle cx="12.200" cy="11.800" r="6" fill="#34b352" /><path d="M9.500 9c.8-1.200 1.300-.6 1.800.7l-.5 1.100c.6 1.100 1.400 1.700 2.400 2.100l.9-.9c1.800.8 1.900 1.200.9 2-2.200 1.300-6.500-2.300-5.500-5z" fill="#fff" /></Svg>
);
const GitHub = () => (
  <Svg className="size-6"><circle cx="12" cy="12" r="11.200" fill="#6b2d8f" stroke="#d3c9dc" strokeWidth="1.300" /><path d="M6.500 7l3 1.500c1.500-.4 3.500-.4 5 0l3-1.500c.8 1.500.5 2.800.3 3.300 2 4-.3 7.500-5.800 7.500s-7.800-3.500-5.800-7.500C6 9.800 5.700 8.500 6.500 7z" fill="#fff" /></Svg>
);
const DataTools = () => (
  <Svg className="size-6">
    <path d="M16 2h7v5M2 17v6h6" stroke="#3d9444" strokeWidth="2.600" />
    <path d="M3.500 3v11c0 3 11 3 11 0V3z" fill="#f6bc1c" /><ellipse cx="9" cy="3" rx="5.500" ry="2.500" fill="#ffdf70" />
    <path d="M12 13l9 9M21 12l-10 9" stroke="#e6edf4" strokeWidth="4" /><path d="M12 13l9 9M20.500 12.500L11 21M10.500 12.500l3 2M19 11v3h3" stroke="#1a75bd" strokeWidth="2.300" />
  </Svg>
);
const VisualStudio = () => (
  <Svg className="size-6">
    <path d="M0 6.500L3 5l4.500 4L17 0v7L11 12l6 5v7L7.500 15 3 19l-3-1.500zM3 9v6l3-3z" fill="#7a3fbf" fillRule="evenodd" />
    <path d="M17 0l7 3v18l-7 3z" fill="#b27af0" />
  </Svg>
);
const PyCharm = () => (
  <Svg className="size-6">
    <path d="M1 1h22v22H1z" fill="#fcf84a" /><path d="M1 1h14l-4 22H1z" fill="#21d789" /><path d="M16 1h7v12l-7-6z" fill="#0cb5d8" />
    <path d="M4 4.500h15.500V20H4z" fill="#000" />
    <path d="M6.500 13V7h2.300a1.900 1.900 0 0 1 0 3.800H6.500M16.800 8.200a2.600 2.600 0 1 0 0 3.800M6 17h6" stroke="#fff" strokeWidth="1.500" />
  </Svg>
);

const tasks = [
  [Start, "w-[48px]"],
  [Cortana, "w-[48px]"],
  [TaskView, "w-[48px]"],
  [Edge, "w-[48px] ml-[3px]", "w-10 bg-[#cc2950]"],
  [Code, "w-[48px] ml-px", "w-10 bg-gradient-to-r from-[#cc2950] from-80% to-[#dd8096] to-80%"],
  [Folder, "w-[48px] ml-px", "w-10 bg-[#cc2950]"],
  [Chrome, "w-[48px] ml-px bg-[#f3f6fa]", "w-12 bg-[#cc2950]"],
  [Firefox, "w-[48px] ml-px", "w-10 bg-[#cc2950]"],
  [Sticky, "w-[48px] ml-px"],
  [Postman, "w-[48px] ml-px"],
  [Unity, "w-[48px] ml-px"],
  [VBox, "w-[48px] ml-px"],
  [Netflix, "w-[48px] ml-px"],
  [Spotify, "w-[48px] ml-px"],
  [WhatsApp, "w-[48px] ml-px"],
  [GitHub, "w-[48px] ml-px bg-[#f9b27d]", "w-12 bg-[#f77500]"],
  [DataTools, "w-[48px] ml-px"],
  [VisualStudio, "w-[48px] ml-px"],
  [PyCharm, "w-[48px] ml-px"],
];

function Taskbar() {
  return (
    <footer className="flex h-10 shrink-0 bg-[linear-gradient(90deg,#dfe7ef_0%,#dfe7f1_45%,#e6e6ea_68%,#dde6f1_85%,#dce5ef_100%)] text-black">
      {tasks.map(([Icon, box, bar], i) => (
        <div key={i} className={`flex shrink-0 flex-col items-center justify-end ${box}`}>
          <div className="flex h-[38px] items-center pt-[2px]"><Icon /></div>
          <div className={`h-[2px] ${bar || ""}`} />
        </div>
      ))}
      <div className="ml-auto flex items-center pr-[12px] text-[12px]">
        <Svg box="0 0 16 16" className="size-4" stroke="#111" strokeWidth="1.200"><circle cx="5.500" cy="7.500" r="2.600" /><circle cx="11.500" cy="3.300" r="2.600" /><path d="M1.500 15c0-6 8-6 8 0M9.500 8c2-3 5.500-1.500 5.800 2" /></Svg>
        <Svg box="0 0 12 7" className="ml-[23px] h-[7px] w-3" stroke="#111" strokeWidth="1.300"><path d="M.5 6.500L6 1l5.500 5.500" /></Svg>
        <Svg box="0 0 17 14" className="ml-[10px] h-[14px] w-[17px]" stroke="#111" strokeWidth="1.100"><path d="M.5 4.800h2.800L6.500 1.500v11L3.300 9.300H.5zM8.500 5c1 1.200 1 2.800 0 4M10.500 3.300c2 2 2 5.400 0 7.400M13 1.500c3 3 3 8 0 11" /></Svg>
        <Svg box="0 0 15 9" className="ml-[8px] h-[9px] w-[15px]" stroke="#000"><path d="M.5.500h12.500v8H.5zM14 3v3" /><path d="M2 2h8v5H2z" fill="#000" stroke="none" /></Svg>
        <Svg box="0 0 16 16" className="ml-[12px] size-4" stroke="#111" strokeWidth="1.200"><path d="M5 12l1-4 5-7 2.500 1.800-5 7zM5 12l3.500-2.200M5 9c-4 0-5.500 4-3.500 5.800 2.500 1 4.500-2 5.500-3.500M10 9.500c-1 1.500-1.500 3 0 3.500 2 0 2.500-3 4.500-3 1.500.5.500 2-.5 2" /></Svg>
        <span className="ml-[14px] tracking-[-0.450px]">ENG</span>
        <div className="ml-[9px] flex w-[60px] flex-col items-center text-[12px] leading-[18px] tracking-[-0.450px] whitespace-nowrap"><span>12:45 AM</span><span>11/29/2020</span></div>
        <div className="relative ml-[14px] size-6">
          <Svg box="0 0 16 16" className="mt-[3px] size-4"><path d="M0 .5h16v12h-4.500V16L8 12.500H0z" fill="#000" /><path d="M3 3.500h10M3 6.500h10M3 9.500h7" stroke="#fff" strokeWidth="1.200" /></Svg>
          <span className="absolute top-[10px] left-[8px] flex size-[16px] items-center justify-center rounded-full border border-[#777] bg-[#c8cdd1] text-[11px] font-semibold">1</span>
        </div>
      </div>
      <div className="h-full w-[5px] border-l border-[#b5bcc6]" />
    </footer>
  );
}

export default function App() {
  return (
    <div className="relative flex h-[768px] w-[1366px] flex-col overflow-hidden font-['Open_Sans','Noto_Sans',sans-serif]">
      <Browser />
      <div className="flex h-[625px] shrink-0">
        <Sidebar />
        <Page />
        <Scrollbar />
      </div>
      <Toast />
      <Taskbar />
    </div>
  );
}
